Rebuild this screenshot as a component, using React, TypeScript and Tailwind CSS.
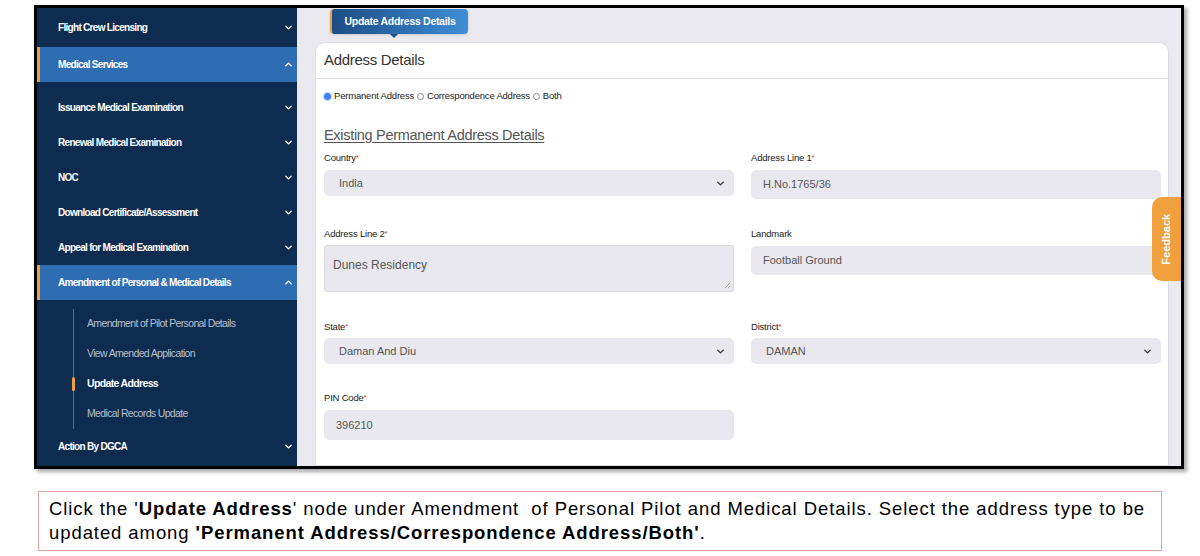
import { ChevronDown, ChevronUp } from "lucide-react";

const font = { fontFamily: '"Liberation Sans", Arial, sans-serif' };

interface NavItem {
  label: string;
  open?: boolean;
}

const topItems: NavItem[] = [
  { label: "Issuance Medical Examination" },
  { label: "Renewal Medical Examination" },
  { label: "NOC" },
  { label: "Download Certificate/Assessment" },
  { label: "Appeal for Medical Examination" },
];

const subItems = [
  "Amendment of Pilot Personal Details",
  "View Amended Application",
  "Update Address",
  "Medical Records Update",
];

const NavRow = ({ label, active, h }: { label: string; active?: boolean; h: string }) => (
  <div
    className={`flex items-center justify-between pr-[3px] ${h} ${
      active ? "bg-[#2f6db2] border-l-[3px] border-[#f0a040] pl-[18px]" : "pl-[21px]"
    }`}
  >
    <span className="text-[10px] font-bold tracking-[-0.7px] text-white">{label}</span>
    {active ? (
      <ChevronUp size={11} strokeWidth={3} className="text-white" />
    ) : (
      <ChevronDown size={11} strokeWidth={3} className="text-white" />
    )}
  </div>
);

const Sidebar = () => (
  <div className="w-[260px] shrink-0 bg-[#0e2b50] flex flex-col">
    <NavRow label="Flight Crew Licensing" h="h-[39px]" />
    <NavRow label="Medical Services" active h="h-[35px]" />
    <div className="h-[8px]" />
    {topItems.map((i) => (
      <NavRow key={i.label} label={i.label} h="h-[35px]" />
    ))}
    <NavRow label="Amendment of Personal & Medical Details" active h="h-[35px]" />
    <div className="ml-[36px] mt-[9px] border-l border-[#5a6f8c] flex flex-col">
      {subItems.map((s) => {
        const on = s === "Update Address";
        return (
          <div key={s} className="relative h-[30px] flex items-center pl-[13px]">
            {on && <div className="absolute left-[-2px] top-[8px] w-[3px] h-[14px] rounded bg-[#f0a040]" />}
            <span
              className={`text-[10.5px] tracking-[-0.65px] ${
                on ? "text-white font-bold" : "text-[#b7c0cc]"
              }`}
            >
              {s}
            </span>
          </div>
        );
      })}
    </div>
    <NavRow label="Action By DGCA" h="h-[35px]" />
  </div>
);

const Label = ({ text, req = true }: { text: string; req?: boolean }) => (
  <div className="h-[12px] leading-[12px] text-[9.5px] text-[#222] tracking-[-0.2px]">
    {text}
    {req && <span className="text-[#d33] text-[8px] align-top">*</span>}
  </div>
);

const SelectBox = ({ value, mt }: { value: string; mt: string }) => (
  <div
    className={`${mt} h-[26px] rounded-[5px] bg-[#e8e8ee] flex items-center justify-between pl-[15px] pr-[8px]`}
  >
    <span className="text-[11px] text-[#555]">{value}</span>
    <ChevronDown size={11} strokeWidth={3} className="text-[#333]" />
  </div>
);

const InputBox = ({ value, mt, h = "h-[29px]" }: { value: string; mt: string; h?: string }) => (
  <div className={`${mt} ${h} rounded-[5px] bg-[#e8e8ee] flex items-center pl-[12px]`}>
    <span className="text-[11px] text-[#555]">{value}</span>
  </div>
);

const Radio = ({ checked, label }: { checked?: boolean; label: string }) => (
  <span className="flex items-center gap-[3px]">
    <span
      className={`w-[7px] h-[7px] rounded-full border ${
        checked ? "border-[#3b82f6] bg-[#3b82f6] ring-1 ring-[#bcd4fb]" : "border-[#888] bg-white"
      }`}
    />
    <span className="text-[9.5px] text-[#222] tracking-[-0.2px]">{label}</span>
  </span>
);

const Content = () => (
  <div className="relative flex-1 bg-[#e9e9ef] overflow-hidden flex flex-col">
    <div className="ml-[33px] mt-[1px] relative w-[138px] h-[25px] rounded-[4px] border-l-2 border-[#e8a040] bg-gradient-to-r from-[#1c4d85] to-[#3f8ed6] flex items-center justify-center shadow">
      <span className="text-[10.5px] text-white font-bold tracking-[-0.3px]">Update Address Details</span>
      <div className="absolute left-[58px] top-[25px] w-0 h-0 border-l-[4px] border-r-[4px] border-t-[4px] border-l-transparent border-r-transparent border-t-[#1f4f86]" />
    </div>
    <div className="ml-[18px] mr-[12px] mt-[8px] flex-1 bg-white border border-[#dcdce2] rounded-t-[10px]">
      <div className="h-[36px] border-b border-[#dcdce2] flex items-center pl-[8px]">
        <span className="text-[15px] text-[#333] tracking-[-0.3px]">Address Details</span>
      </div>
      <div className="pl-[8px] pr-[7px]">
        <div className="mt-[11px] flex items-center gap-[3px] h-[12px]">
          <Radio checked label="Permanent Address" />
          <Radio label="Correspondence Address" />
          <Radio label="Both" />
        </div>
        <div className="mt-[24px] h-[18px] leading-[18px] text-[14.5px] text-[#555] underline underline-offset-2 tracking-[-0.3px]">
          Existing Permanent Address Details
        </div>
        <div className="mt-[8px] grid grid-cols-2 gap-x-[17px] items-start">
          <div>
            <Label text="Country" />
            <SelectBox value="India" mt="mt-[6px]" />
          </div>
          <div>
            <Label text="Address Line 1" />
            <InputBox value="H.No.1765/36" mt="mt-[6px]" />
          </div>
        </div>
        <div className="mt-[29px] grid grid-cols-2 gap-x-[17px] items-start">
          <div>
            <Label text="Address Line 2" />
            <div className="relative mt-[5px] h-[47px] rounded-[3px] bg-[#e8e8ee] border border-[#d6d6dc] pl-[8px] pt-[6px]">
              <span className="text-[12px] text-[#555]">Dunes Residency</span>
              <svg className="absolute right-[2px] bottom-[2px]" width="7" height="7" viewBox="0 0 7 7">
                <path d="M6 1L1 6M6 4L4 6" stroke="#888" strokeWidth="0.8" />
              </svg>
            </div>
          </div>
          <div>
            <Label text="Landmark" req={false} />
            <InputBox value="Football Ground" mt="mt-[6px]" />
          </div>
        </div>
        <div className="mt-[29px] grid grid-cols-2 gap-x-[17px] items-start">
          <div>
            <Label text="State" />
            <SelectBox value="Daman And Diu" mt="mt-[5px]" />
          </div>
          <div>
            <Label text="District" />
            <SelectBox value="DAMAN" mt="mt-[5px]" />
          </div>
        </div>
        <div className="mt-[28px] grid grid-cols-2 gap-x-[17px] items-start">
          <div>
            <Label text="PIN Code" />
            <InputBox value="396210" mt="mt-[6px]" h="h-[30px]" />
          </div>
        </div>
      </div>
    </div>
    <div className="absolute right-0 top-[189px] w-[29px] h-[84px] rounded-l-[10px] bg-[#f0a03c] flex items-center justify-center">
      <span className="-rotate-90 text-[11px] font-bold text-white whitespace-nowrap">Feedback</span>
    </div>
  </div>
);

export default function App() {
  return (
    <div className="w-[1200px] h-[556px] bg-white overflow-hidden" style={font}>
      <div className="ml-[34px] mt-[5px] w-[1150px] h-[464px] border-[3px] border-black flex shadow-[3px_3px_4px_rgba(0,0,0,0.35)]">
        <Sidebar />
        <Content />
      </div>
      <div className="ml-[38px] mt-[22px] w-[1124px] h-[60px] border border-[#e4a4a4] pl-[10px] pt-[5px] text-[18.5px] leading-[24px] text-black tracking-[0.92px]">
        Click the '<b>Update Address</b>' node under Amendment&nbsp; of Personal Pilot and Medical Details. Select the address type to be
        <br />
        updated among <b>'Permanent Address/Correspondence Address/Both'</b>.
      </div>
    </div>
  );
}
